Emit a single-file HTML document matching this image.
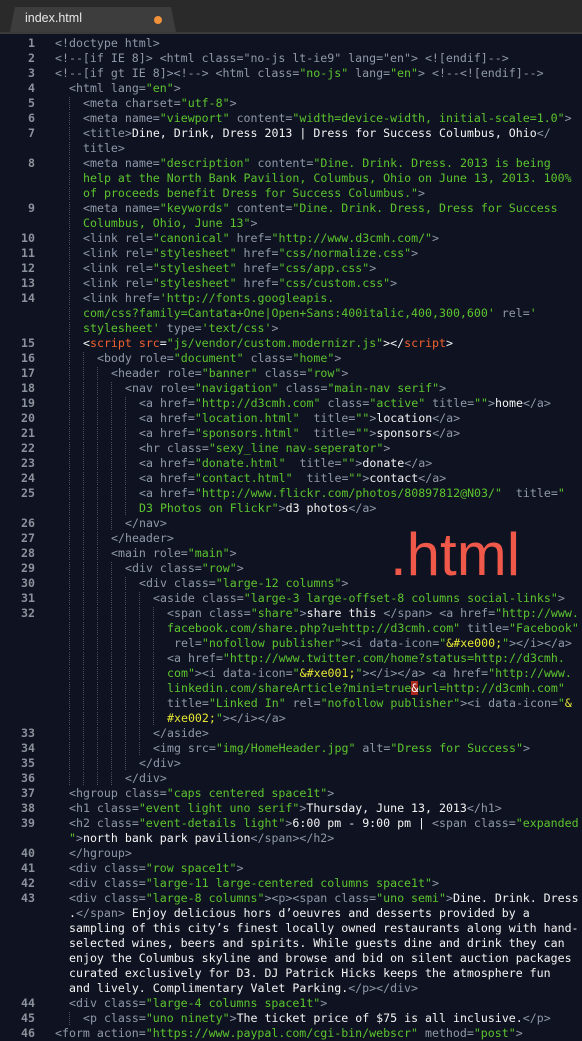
<!DOCTYPE html>
<html><head><meta charset="utf-8">
<style>
html,body{margin:0;padding:0;}
body{width:582px;height:1037px;overflow:hidden;background:#0f1321;position:relative;font-family:"DejaVu Sans Mono","Liberation Mono",monospace;font-size:11.6px;}
.bar{position:absolute;left:0;top:0;width:582px;height:32px;background:#2a2a2a;border-bottom:2px solid #3a3a3a;}
.tab{position:absolute;left:10px;top:7px;width:166px;height:25px;background:#3d3d3d;border-radius:7px 7px 0 0;clip-path:polygon(0 100%,5px 0,161px 0,100% 100%);}
.tabt{position:absolute;left:25px;top:11px;font-family:"Liberation Sans",sans-serif;font-size:12.5px;color:#e8e8e8;}
.dot{position:absolute;left:154px;top:16px;width:8px;height:8px;border-radius:50%;background:#f2923a;}
.n{position:absolute;left:0;width:35px;text-align:right;color:#8c929c;line-height:15px;font-weight:bold;}
.r{position:absolute;white-space:pre;line-height:15px;color:#8f98aa;}
.r i{font-style:normal;color:#5cc42e;}
.r b{color:#f4f4f4;font-weight:normal;}
.r em{font-style:normal;color:#f0612e;}
.r u{text-decoration:none;color:#e6e633;}
.r s{text-decoration:none;color:#fff;background:#a8281e;}
.i0{left:55px}.i1{left:69px}.i2{left:83px}.i3{left:97px}.i4{left:111px}.i5{left:125px}.i6{left:139px}.i7{left:153px}.i8{left:167px}
.r::before{content:"";position:absolute;top:0;height:15px;background-image:linear-gradient(to bottom,#0f1321 50%,transparent 50%),linear-gradient(to right,#4a505c 1px,transparent 1px);background-size:14px 2px,14px 2px;}
.i2::before{left:-14px;width:14px}.i3::before{left:-28px;width:28px}.i4::before{left:-42px;width:42px}.i5::before{left:-56px;width:56px}.i6::before{left:-70px;width:70px}.i7::before{left:-84px;width:84px}.i8::before{left:-98px;width:98px}
.big{position:absolute;left:390px;top:525px;font-family:"Liberation Sans",sans-serif;font-size:60px;line-height:60px;color:#f0584a;}
</style></head><body>
<div class="bar"><div class="tab"></div><div class="tabt">index.html</div><div class="dot"></div></div>

<div class="n" style="top:36px">1</div>
<div class="n" style="top:51px">2</div>
<div class="n" style="top:66px">3</div>
<div class="n" style="top:81px">4</div>
<div class="n" style="top:96px">5</div>
<div class="n" style="top:111px">6</div>
<div class="n" style="top:126px">7</div>
<div class="n" style="top:156px">8</div>
<div class="n" style="top:201px">9</div>
<div class="n" style="top:231px">10</div>
<div class="n" style="top:246px">11</div>
<div class="n" style="top:261px">12</div>
<div class="n" style="top:276px">13</div>
<div class="n" style="top:291px">14</div>
<div class="n" style="top:336px">15</div>
<div class="n" style="top:351px">16</div>
<div class="n" style="top:366px">17</div>
<div class="n" style="top:381px">18</div>
<div class="n" style="top:396px">19</div>
<div class="n" style="top:411px">20</div>
<div class="n" style="top:426px">21</div>
<div class="n" style="top:441px">22</div>
<div class="n" style="top:456px">23</div>
<div class="n" style="top:471px">24</div>
<div class="n" style="top:486px">25</div>
<div class="n" style="top:516px">26</div>
<div class="n" style="top:531px">27</div>
<div class="n" style="top:546px">28</div>
<div class="n" style="top:561px">29</div>
<div class="n" style="top:576px">30</div>
<div class="n" style="top:591px">31</div>
<div class="n" style="top:606px">32</div>
<div class="n" style="top:726px">33</div>
<div class="n" style="top:741px">34</div>
<div class="n" style="top:756px">35</div>
<div class="n" style="top:771px">36</div>
<div class="n" style="top:786px">37</div>
<div class="n" style="top:801px">38</div>
<div class="n" style="top:816px">39</div>
<div class="n" style="top:846px">40</div>
<div class="n" style="top:861px">41</div>
<div class="n" style="top:876px">42</div>
<div class="n" style="top:891px">43</div>
<div class="n" style="top:996px">44</div>
<div class="n" style="top:1011px">45</div>
<div class="n" style="top:1026px">46</div>

<div class="r i0" style="top:36px">&lt;!doctype html&gt;</div>
<div class="r i0" style="top:51px">&lt;!--[if IE 8]&gt; &lt;html class="no-js lt-ie9" lang="en"&gt; &lt;![endif]--&gt;</div>
<div class="r i0" style="top:66px">&lt;!--[if gt IE 8]&gt;&lt;!--&gt; &lt;html class=<i>"no-js"</i> lang=<i>"en"</i>&gt; &lt;!--&lt;![endif]--&gt;</div>
<div class="r i1" style="top:81px">&lt;html lang=<i>"en"</i>&gt;</div>
<div class="r i2" style="top:96px">&lt;meta charset=<i>"utf-8"</i>&gt;</div>
<div class="r i2" style="top:111px">&lt;meta name=<i>"viewport"</i> content=<i>"width=device-width, initial-scale=1.0"</i>&gt;</div>
<div class="r i2" style="top:126px">&lt;title&gt;<b>Dine, Drink, Dress 2013 | Dress for Success Columbus, Ohio</b>&lt;/</div>
<div class="r i2" style="top:141px">title&gt;</div>
<div class="r i2" style="top:156px">&lt;meta name=<i>"description"</i> content=<i>"Dine. Drink. Dress. 2013 is being</i></div>
<div class="r i2" style="top:171px"><i>help at the North Bank Pavilion, Columbus, Ohio on June 13, 2013. 100%</i></div>
<div class="r i2" style="top:186px"><i>of proceeds benefit Dress for Success Columbus."</i>&gt;</div>
<div class="r i2" style="top:201px">&lt;meta name=<i>"keywords"</i> content=<i>"Dine. Drink. Dress, Dress for Success</i></div>
<div class="r i2" style="top:216px"><i>Columbus, Ohio, June 13"</i>&gt;</div>
<div class="r i2" style="top:231px">&lt;link rel=<i>"canonical"</i> href=<i>"http://www.d3cmh.com/"</i>&gt;</div>
<div class="r i2" style="top:246px">&lt;link rel=<i>"stylesheet"</i> href=<i>"css/normalize.css"</i>&gt;</div>
<div class="r i2" style="top:261px">&lt;link rel=<i>"stylesheet"</i> href=<i>"css/app.css"</i>&gt;</div>
<div class="r i2" style="top:276px">&lt;link rel=<i>"stylesheet"</i> href=<i>"css/custom.css"</i>&gt;</div>
<div class="r i2" style="top:291px">&lt;link href=<i>'http://fonts.googleapis.</i></div>
<div class="r i2" style="top:306px"><i>com/css?family=Cantata+One|Open+Sans:400italic,400,300,600'</i> rel=<i>'</i></div>
<div class="r i2" style="top:321px"><i>stylesheet'</i> type=<i>'text/css'</i>&gt;</div>
<div class="r i2" style="top:336px"><b>&lt;</b><em>script src</em><b>=</b><i>"js/vendor/custom.modernizr.js"</i><b>&gt;&lt;/</b><em>script</em><b>&gt;</b></div>
<div class="r i3" style="top:351px">&lt;body role=<i>"document"</i> class=<i>"home"</i>&gt;</div>
<div class="r i4" style="top:366px">&lt;header role=<i>"banner"</i> class=<i>"row"</i>&gt;</div>
<div class="r i5" style="top:381px">&lt;nav role=<i>"navigation"</i> class=<i>"main-nav serif"</i>&gt;</div>
<div class="r i6" style="top:396px">&lt;a href=<i>"http://d3cmh.com"</i> class=<i>"active"</i> title=<i>""</i>&gt;<b>home</b>&lt;/a&gt;</div>
<div class="r i6" style="top:411px">&lt;a href=<i>"location.html"</i>  title=<i>""</i>&gt;<b>location</b>&lt;/a&gt;</div>
<div class="r i6" style="top:426px">&lt;a href=<i>"sponsors.html"</i>  title=<i>""</i>&gt;<b>sponsors</b>&lt;/a&gt;</div>
<div class="r i6" style="top:441px">&lt;hr class=<i>"sexy_line nav-seperator"</i>&gt;</div>
<div class="r i6" style="top:456px">&lt;a href=<i>"donate.html"</i>  title=<i>""</i>&gt;<b>donate</b>&lt;/a&gt;</div>
<div class="r i6" style="top:471px">&lt;a href=<i>"contact.html"</i>  title=<i>""</i>&gt;<b>contact</b>&lt;/a&gt;</div>
<div class="r i6" style="top:486px">&lt;a href=<i>"http://www.flickr.com/photos/80897812@N03/"</i>  title=<i>"</i></div>
<div class="r i6" style="top:501px"><i>D3 Photos on Flickr"</i>&gt;<b>d3 photos</b>&lt;/a&gt;</div>
<div class="r i5" style="top:516px">&lt;/nav&gt;</div>
<div class="r i4" style="top:531px">&lt;/header&gt;</div>
<div class="r i4" style="top:546px">&lt;main role=<i>"main"</i>&gt;</div>
<div class="r i5" style="top:561px">&lt;div class=<i>"row"</i>&gt;</div>
<div class="r i6" style="top:576px">&lt;div class=<i>"large-12 columns"</i>&gt;</div>
<div class="r i7" style="top:591px">&lt;aside class=<i>"large-3 large-offset-8 columns social-links"</i>&gt;</div>
<div class="r i8" style="top:606px">&lt;span class=<i>"share"</i>&gt;<b>share this </b>&lt;/span&gt; &lt;a href=<i>"http://www.</i></div>
<div class="r i8" style="top:621px"><i>facebook.com/share.php?u=http://d3cmh.com"</i> title=<i>"Facebook"</i></div>
<div class="r i8" style="top:636px"> rel=<i>"nofollow publisher"</i>&gt;&lt;i data-icon=<i>"</i><u>&amp;#xe000;</u><i>"</i>&gt;&lt;/i&gt;&lt;/a&gt;</div>
<div class="r i8" style="top:651px">&lt;a href=<i>"http://www.twitter.com/home?status=http://d3cmh.</i></div>
<div class="r i8" style="top:666px"><i>com"</i>&gt;&lt;i data-icon=<i>"</i><u>&amp;#xe001;</u><i>"</i>&gt;&lt;/i&gt;&lt;/a&gt; &lt;a href=<i>"http://www.</i></div>
<div class="r i8" style="top:681px"><i>linkedin.com/shareArticle?mini=true</i><s>&amp;</s><i>url=http://d3cmh.com"</i></div>
<div class="r i8" style="top:696px">title=<i>"Linked In"</i> rel=<i>"nofollow publisher"</i>&gt;&lt;i data-icon=<i>"</i><u>&amp;</u></div>
<div class="r i8" style="top:711px"><u>#xe002;</u><i>"</i>&gt;&lt;/i&gt;&lt;/a&gt;</div>
<div class="r i7" style="top:726px">&lt;/aside&gt;</div>
<div class="r i7" style="top:741px">&lt;img src=<i>"img/HomeHeader.jpg"</i> alt=<i>"Dress for Success"</i>&gt;</div>
<div class="r i6" style="top:756px">&lt;/div&gt;</div>
<div class="r i5" style="top:771px">&lt;/div&gt;</div>
<div class="r i1" style="top:786px">&lt;hgroup class=<i>"caps centered space1t"</i>&gt;</div>
<div class="r i1" style="top:801px">&lt;h1 class=<i>"event light uno serif"</i>&gt;<b>Thursday, June 13, 2013</b>&lt;/h1&gt;</div>
<div class="r i1" style="top:816px">&lt;h2 class=<i>"event-details light"</i>&gt;<b>6:00 pm - 9:00 pm | </b>&lt;span class=<i>"expanded</i></div>
<div class="r i1" style="top:831px"><i>"</i>&gt;<b>north bank park pavilion</b>&lt;/span&gt;&lt;/h2&gt;</div>
<div class="r i1" style="top:846px">&lt;/hgroup&gt;</div>
<div class="r i1" style="top:861px">&lt;div class=<i>"row space1t"</i>&gt;</div>
<div class="r i1" style="top:876px">&lt;div class=<i>"large-11 large-centered columns space1t"</i>&gt;</div>
<div class="r i1" style="top:891px">&lt;div class=<i>"large-8 columns"</i>&gt;&lt;p&gt;&lt;span class=<i>"uno semi"</i>&gt;<b>Dine. Drink. Dress</b></div>
<div class="r i1" style="top:906px"><b>.</b>&lt;/span&gt;<b> Enjoy delicious hors d’oeuvres and desserts provided by a</b></div>
<div class="r i1" style="top:921px"><b>sampling of this city’s finest locally owned restaurants along with hand-</b></div>
<div class="r i1" style="top:936px"><b>selected wines, beers and spirits. While guests dine and drink they can</b></div>
<div class="r i1" style="top:951px"><b>enjoy the Columbus skyline and browse and bid on silent auction packages</b></div>
<div class="r i1" style="top:966px"><b>curated exclusively for D3. DJ Patrick Hicks keeps the atmosphere fun</b></div>
<div class="r i1" style="top:981px"><b>and lively. Complimentary Valet Parking.</b>&lt;/p&gt;&lt;/div&gt;</div>
<div class="r i1" style="top:996px">&lt;div class=<i>"large-4 columns space1t"</i>&gt;</div>
<div class="r i2" style="top:1011px">&lt;p class=<i>"uno ninety"</i>&gt;<b>The ticket price of $75 is all inclusive.</b>&lt;/p&gt;</div>
<div class="r i0" style="top:1026px">&lt;form action=<i>"https://www.paypal.com/cgi-bin/webscr"</i> method=<i>"post"</i>&gt;</div>

<div class="big">.html</div>
</body></html>
